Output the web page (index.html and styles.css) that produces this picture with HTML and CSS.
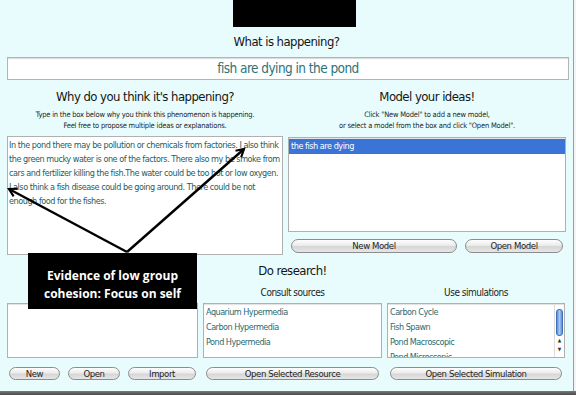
FILE: index.html
```html
<!DOCTYPE html>
<html>
<head>
    <title>Pond Inquiry</title>
    <link rel="stylesheet" href="styles.css">
</head>
<body>
    <div class="window">
        <div class="redact"></div>
        <h1>What is happening?</h1>
        <div class="question">fish are dying in the pond</div>

        <div class="columns">
            <div class="col">
                <h2>Why do you think it's happening?</h2>
                <p class="hint">Type in the box below why you think this phenomenon is happening.<br>Feel free to propose multiple ideas or explanations.</p>
                <div class="textbox">In the pond there may be pollution or chemicals from factories. I also think<br>the green mucky water is one of the factors. There also my be smoke from<br>cars and fertilizer killing the fish.The water could be too hot or low oxygen.<br>I also think a fish disease could be going around. There could be not<br>enough food for the fishes.</div>
            </div>
            <div class="col">
                <h2>Model your ideas!</h2>
                <p class="hint">Click "New Model" to add a new model,<br>or select a model from the box and click "Open Model".</p>
                <div class="listbox models">
                    <div class="item selected">the fish are dying</div>
                </div>
                <div class="btnrow model-btns">
                    <button class="btn btn-new-model">New Model</button>
                    <button class="btn btn-open-model">Open Model</button>
                </div>
            </div>
        </div>

        <h2 class="research-title">Do research!</h2>
        <div class="research">
            <div class="rcol files">
                <div class="listbox short"></div>
                <div class="btnrow file-btns">
                    <button class="btn btn-new">New</button>
                    <button class="btn btn-open">Open</button>
                    <button class="btn btn-import">Import</button>
                </div>
            </div>
            <div class="rcol">
                <div class="label">Consult sources</div>
                <div class="listbox short">
                    <div class="items">
                        <div class="item">Aquarium Hypermedia</div>
                        <div class="item">Carbon Hypermedia</div>
                        <div class="item">Pond Hypermedia</div>
                    </div>
                </div>
                <button class="btn btn-full">Open Selected Resource</button>
            </div>
            <div class="rcol">
                <div class="label">Use simulations</div>
                <div class="listbox short">
                    <div class="items">
                        <div class="item">Carbon Cycle</div>
                        <div class="item">Fish Spawn</div>
                        <div class="item">Pond Macroscopic</div>
                        <div class="item">Pond Microscopic</div>
                    </div>
                    <div class="scrollbar">
                        <div class="thumb"></div>
                        <div class="arrow">&#9650;</div>
                        <div class="arrow">&#9660;</div>
                    </div>
                </div>
                <button class="btn btn-full">Open Selected Simulation</button>
            </div>
        </div>

        <!-- annotation laid over the screenshot -->
        <svg class="arrows" width="574" height="391" viewBox="0 0 574 391">
            <defs>
                <marker id="head" viewBox="0 0 10 10" refX="8" refY="5" markerWidth="4.5" markerHeight="4.5" orient="auto">
                    <path d="M1,1 L8,5 L1,9" fill="none" stroke="#000" stroke-width="2"/>
                </marker>
            </defs>
            <line x1="127" y1="252" x2="9" y2="189" stroke="#000" stroke-width="2.4" marker-end="url(#head)"/>
            <line x1="127" y1="252" x2="244" y2="149" stroke="#000" stroke-width="2.4" marker-end="url(#head)"/>
        </svg>
        <div class="callout">Evidence of low group<br>cohesion: Focus on self</div>
    </div>
    <div class="statusbar"></div>
</body>
</html>
```

FILE: styles.css
```css
body {
    margin: 0;
    background: #f4f4f4;
    font-family: "DejaVu Sans Condensed", "DejaVu Sans", sans-serif;
    color: #1c1c1c;
}

.window {
    position: relative;
    box-sizing: border-box;
    width: 574px;
    height: 391px;
    background: #e8fcfd;
    border-right: 1px solid #9c9c9c;
    overflow: hidden;
}

.redact {
    width: 123px;
    height: 27px;
    margin-left: 233px;
    background: #000;
}

h1, h2 {
    margin: 0;
    font-size: 13px;
    line-height: 17px;
    letter-spacing: -0.55px;
    font-weight: normal;
    text-align: center;
    color: #151515;
}

h1 {
    margin-top: 6px;
}

.question {
    margin: 7px 4px 0 7px;
    height: 23px;
    box-sizing: border-box;
    background: #fff;
    border: 1px solid #b4b4b4;
    box-shadow: inset 0 1px 1px rgba(0, 0, 0, 0.15);
    text-align: center;
    font-size: 13.5px;
    letter-spacing: -0.55px;
    line-height: 21px;
    color: #2b7379;
}

.columns {
    display: grid;
    grid-template-columns: 276px 278px;
    column-gap: 5px;
    margin: 8px 0 0 7px;
}

.hint {
    margin: 5px 0 0;
    font-size: 7.5px;
    letter-spacing: -0.2px;
    line-height: 10.5px;
    text-align: center;
    color: #1e1e1e;
}

.textbox {
    margin-top: 5px;
    height: 119px;
    box-sizing: border-box;
    background: #fff;
    border: 1px solid #b0b0b0;
    padding: 1px 1px;
    font-size: 9px;
    letter-spacing: -0.45px;
    line-height: 14px;
    color: #255d61;
    white-space: nowrap;
    overflow: hidden;
}

.listbox {
    box-sizing: border-box;
    background: #fff;
    border: 1px solid #b0b0b0;
    box-shadow: inset 0 1px 1px rgba(0, 0, 0, 0.12);
    overflow: hidden;
}

.models {
    margin-top: 6px;
    height: 95px;
    padding-top: 1px;
}

.item {
    font-size: 9px;
    letter-spacing: -0.5px;
    line-height: 15px;
    padding-left: 2px;
    color: #2a6a70;
    white-space: nowrap;
}

.item.selected {
    background: #3a74d7;
    color: #fff;
    letter-spacing: -0.45px;
}

.btnrow {
    display: flex;
    gap: 8px;
}

.btn {
    height: 14px;
    padding: 0;
    border: 1px solid #8c8c8c;
    border-radius: 7px;
    background: linear-gradient(#fefefe, #ececec 45%, #d6d6d6 55%, #e6e6e6);
    font-family: inherit;
    font-size: 9.5px;
    letter-spacing: -0.4px;
    line-height: 12px;
    color: #1e1e1e;
}

.model-btns {
    margin-top: 7px;
    padding: 0 3px;
}

.btn-new-model { width: 166px; }
.btn-open-model { flex: 1; }

.research-title {
    margin-top: 7px;
    padding-left: 12px;
}

.research {
    display: grid;
    grid-template-columns: 191px 179px 178px;
    column-gap: 5px;
    margin: 7px 0 0 7px;
}

.rcol {
    display: flex;
    flex-direction: column;
}

.files {
    padding-top: 17px;
}

.label {
    font-size: 10px;
    letter-spacing: -0.5px;
    line-height: 13px;
    text-align: center;
    margin-bottom: 4px;
}

.short {
    display: flex;
    height: 55px;
    padding-top: 1px;
}

.items {
    flex: 1;
    overflow: hidden;
}

.scrollbar {
    width: 9px;
    border-left: 1px solid #dcdcdc;
    margin-top: -1px;
    display: flex;
    flex-direction: column;
    align-items: center;
}

.thumb {
    width: 5px;
    height: 25px;
    margin-top: 5px;
    border-radius: 3px;
    border: 1px solid #3d6fb8;
    background: linear-gradient(90deg, #5a8fdc, #a9c8f2, #5a8fdc);
}

.arrow {
    font-size: 5px;
    line-height: 9px;
    color: #333;
}

.arrow:first-of-type {
    margin-top: 6px;
}

.btn-full {
    margin: 9px 3px 0;
    height: 13px;
    line-height: 11px;
}

.file-btns {
    margin-top: 9px;
    padding-left: 2px;
}

.file-btns .btn {
    height: 13px;
    line-height: 11px;
}

.btn-new { width: 51px; }
.btn-open { width: 52px; }
.btn-import { width: 68px; }

.arrows {
    position: absolute;
    left: 0;
    top: 0;
    pointer-events: none;
}

.callout {
    position: absolute;
    left: 28px;
    top: 253px;
    width: 169px;
    height: 56px;
    box-sizing: border-box;
    padding-top: 14px;
    background: #000;
    color: #fff;
    font-family: "Open Sans", "Liberation Sans", sans-serif;
    font-weight: bold;
    font-size: 12px;
    line-height: 18px;
    text-align: center;
}

.statusbar {
    width: 576px;
    height: 4px;
    background: linear-gradient(#7a7a7a, #4a4a4a);
}
```
